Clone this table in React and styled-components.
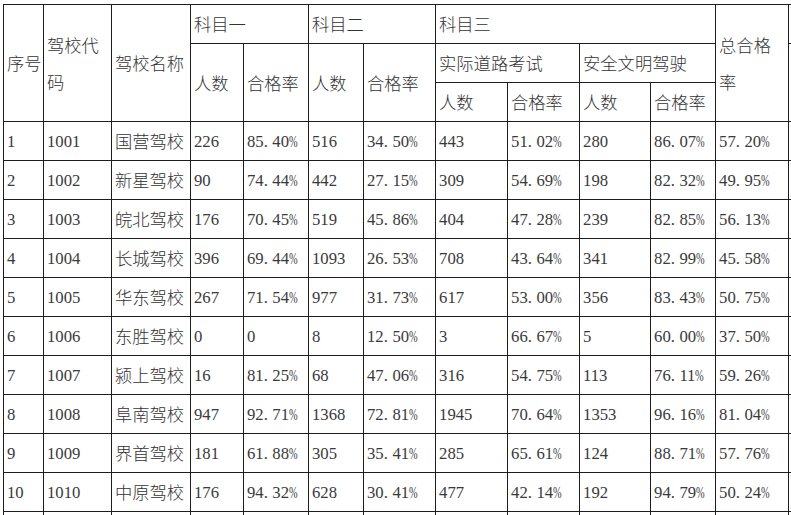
import React from "react";
import styled, { createGlobalStyle } from "styled-components";

const Global = createGlobalStyle`
  html, body { margin: 0; padding: 0; background: #fff; overflow: hidden; }
  body { width: 791px; height: 515px; }
`;

const Page = styled.div`
  padding: 4px 0 0 3px;
  width: 791px;
  height: 515px;
  box-sizing: border-box;
  overflow: hidden;
`;

const Table = styled.table`
  border-collapse: collapse;
  table-layout: fixed;
  width: 865px;
  font-family: "Noto Sans CJK SC", sans-serif;
  font-size: 17.3px;
  font-weight: 300;
  color: #333;
`;

const Row = styled.tr`
  height: 39px;
`;

const Cell = styled.td`
  border: 1px solid #1e1e1e;
  padding: 0 2px 0 3px;
  text-align: left;
  vertical-align: middle;
  white-space: nowrap;
  line-height: ${(p) => (p.$tall ? "37px" : "20px")};
  overflow: hidden;
`;

const Figure = styled.span`
  font-family: "Liberation Serif", "Times New Roman", serif;
  font-weight: 400;
  font-size: 16.7px;
  color: #3a3a3a;
`;

const Dot = styled.span`
  display: inline-block;
  width: 0.52em;
`;

const Pct = styled.span`
  display: inline-block;
  transform: scaleX(0.62);
  transform-origin: left center;
`;

const widths = [40, 68, 79, 53, 65, 55, 72, 72, 72, 71, 65, 73, 80];

const rows = [
  ["1", "1001", "国营驾校", "226", "85.40%", "516", "34.50%", "443", "51.02%", "280", "86.07%", "57.20%"],
  ["2", "1002", "新星驾校", "90", "74.44%", "442", "27.15%", "309", "54.69%", "198", "82.32%", "49.95%"],
  ["3", "1003", "皖北驾校", "176", "70.45%", "519", "45.86%", "404", "47.28%", "239", "82.85%", "56.13%"],
  ["4", "1004", "长城驾校", "396", "69.44%", "1093", "26.53%", "708", "43.64%", "341", "82.99%", "45.58%"],
  ["5", "1005", "华东驾校", "267", "71.54%", "977", "31.73%", "617", "53.00%", "356", "83.43%", "50.75%"],
  ["6", "1006", "东胜驾校", "0", "0", "8", "12.50%", "3", "66.67%", "5", "60.00%", "37.50%"],
  ["7", "1007", "颍上驾校", "16", "81.25%", "68", "47.06%", "316", "54.75%", "113", "76.11%", "59.26%"],
  ["8", "1008", "阜南驾校", "947", "92.71%", "1368", "72.81%", "1945", "70.64%", "1353", "96.16%", "81.04%"],
  ["9", "1009", "界首驾校", "181", "61.88%", "305", "35.41%", "285", "65.61%", "124", "88.71%", "57.76%"],
  ["10", "1010", "中原驾校", "176", "94.32%", "628", "30.41%", "477", "42.14%", "192", "94.79%", "50.24%"],
];

function Value({ v }) {
  if (!/^[0-9.%]+$/.test(v)) return v;
  const m = v.match(/^(\d+)(?:\.(\d+))?(%?)$/);
  return (
    <Figure>
      {m[1]}
      {m[2] !== undefined && (
        <>
          <Dot>.</Dot>
          {m[2]}
        </>
      )}
      {m[3] && <Pct>%</Pct>}
    </Figure>
  );
}

export default function App() {
  return (
    <Page>
      <Global />
      <Table>
        <colgroup>
          {widths.map((w, i) => (
            <col key={i} style={{ width: w }} />
          ))}
        </colgroup>
        <thead>
          <Row>
            <Cell rowSpan={3}>序号</Cell>
            <Cell rowSpan={3} $tall>
              驾校代
              <br />码
            </Cell>
            <Cell rowSpan={3}>驾校名称</Cell>
            <Cell colSpan={2}>科目一</Cell>
            <Cell colSpan={2}>科目二</Cell>
            <Cell colSpan={4}>科目三</Cell>
            <Cell rowSpan={3} $tall>
              总合格
              <br />率
            </Cell>
            <Cell />
          </Row>
          <Row>
            <Cell rowSpan={2}>人数</Cell>
            <Cell rowSpan={2}>合格率</Cell>
            <Cell rowSpan={2}>人数</Cell>
            <Cell rowSpan={2}>合格率</Cell>
            <Cell colSpan={2}>实际道路考试</Cell>
            <Cell colSpan={2}>安全文明驾驶</Cell>
            <Cell rowSpan={2} />
          </Row>
          <Row>
            <Cell>人数</Cell>
            <Cell>合格率</Cell>
            <Cell>人数</Cell>
            <Cell>合格率</Cell>
          </Row>
        </thead>
        <tbody>
          {rows.map((r) => (
            <Row key={r[0]}>
              {r.map((v, j) => (
                <Cell key={j}>
                  <Value v={v} />
                </Cell>
              ))}
              <Cell />
            </Row>
          ))}
          <Row>
            {widths.map((_, j) => (
              <Cell key={j} />
            ))}
          </Row>
        </tbody>
      </Table>
    </Page>
  );
}
